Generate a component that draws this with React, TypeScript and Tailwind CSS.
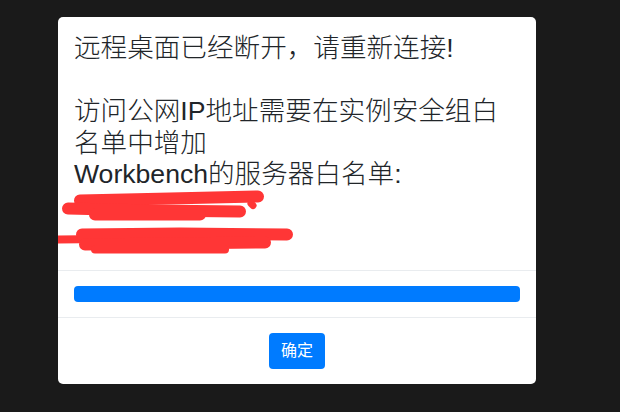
import React from "react";

export default function App() {
  return (
    <div className="w-[620px] h-[412px] bg-[#1a1a1a] overflow-hidden pt-[17px] pl-[58px]" style={{ fontFamily: '"Liberation Sans", "Noto Sans CJK SC", sans-serif' }}>
      <div className="w-[478px] bg-white rounded-[5px] overflow-hidden">
        <div className="px-4 pt-4 pb-4">
          <div className="text-[26.6px] leading-[31.5px] text-[#212529] font-light">
            远程桌面已经断开，请重新连接!
            <br />
            <br />
            访问公网IP地址需要在实例安全组白名单中增加
            <br />
            Workbench的服务器白名单:
          </div>
          <svg width="470" height="63" viewBox="0 0 470 63" className="block -ml-[19px] overflow-visible">
            <g transform="translate(-55,-190.5)" stroke="#ff3636" strokeLinecap="round" strokeLinejoin="round" fill="none">
              <path d="M80 200 L170 198 L258 196" strokeWidth="12" />
              <path d="M68 208 L150 210 L240 211" strokeWidth="12" />
              <path d="M95 214 L200 214" strokeWidth="12" />
              <path d="M251 203 L253 205" strokeWidth="7" />
              <path d="M57 239 L150 238" strokeWidth="8" />
              <path d="M82 234 L180 233 L287 234" strokeWidth="12" />
              <path d="M85 244 L265 242" strokeWidth="12" />
              <path d="M95 249 L225 249" strokeWidth="8" />
            </g>
          </svg>
        </div>
        <div className="border-t border-[#e9ecef] px-4 py-[15px]">
          <div className="h-4 rounded-[4px] bg-[#007bff]" />
        </div>
        <div className="border-t border-[#e9ecef] py-[15px] flex justify-center">
          <button className="h-9 px-3 rounded-[4px] bg-[#007bff] text-white text-[16px] leading-6">确定</button>
        </div>
      </div>
    </div>
  );
}
